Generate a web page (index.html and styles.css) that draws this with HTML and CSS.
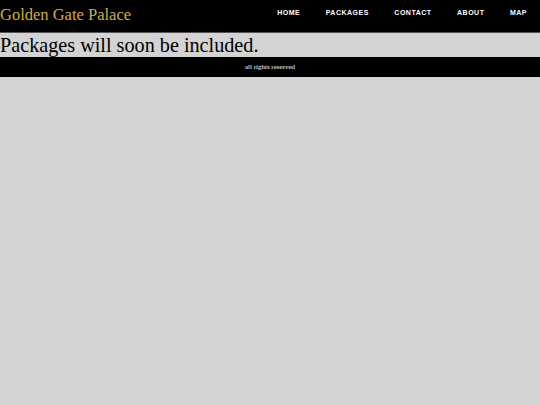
FILE: index.html
```html
<!DOCTYPE html>
<html>
<head>
<meta charset="utf-8">
<link rel="stylesheet" href="styles.css">
</head>
<body>
<header class="top">
  <div class="brand">Golden Gate Palace</div>
  <nav class="nav">
    <a href="#">HOME</a>
    <a href="#">PACKAGES</a>
    <a href="#">CONTACT</a>
    <a href="#">ABOUT</a>
    <a href="#">MAP</a>
  </nav>
</header>
<main class="main">
  <h1 class="headline">Packages will soon be included.</h1>
</main>
<footer class="foot">all rights reserved</footer>
</body>
</html>
```
FILE: styles.css
```css
html, body {
  margin: 0;
  padding: 0;
  background: #d3d3d3;
  font-family: "Liberation Serif", "Times New Roman", serif;
}
.top {
  background: #000;
  height: 32px;
  border-bottom: 1px solid #555;
  display: flex;
  justify-content: space-between;
  align-items: flex-start;
}
.brand {
  color: #d4af37;
  font-size: 16.5px;
  line-height: 29px;
}
.nav {
  display: flex;
  padding-top: 9px;
  padding-right: 13px;
}
.nav a {
  color: #fff;
  text-decoration: none;
  font-family: "Liberation Sans", Arial, sans-serif;
  font-weight: bold;
  font-size: 7px;
  letter-spacing: 0.5px;
  margin-left: 25.5px;
}
.main {
  height: 24px;
}
.headline {
  margin: 0;
  font-weight: normal;
  font-size: 20.2px;
  line-height: 24px;
  color: #000;
}
.foot {
  background: #000;
  color: #fff;
  text-align: center;
  font-size: 7px;
  height: 20px;
  line-height: 20px;
}
```
